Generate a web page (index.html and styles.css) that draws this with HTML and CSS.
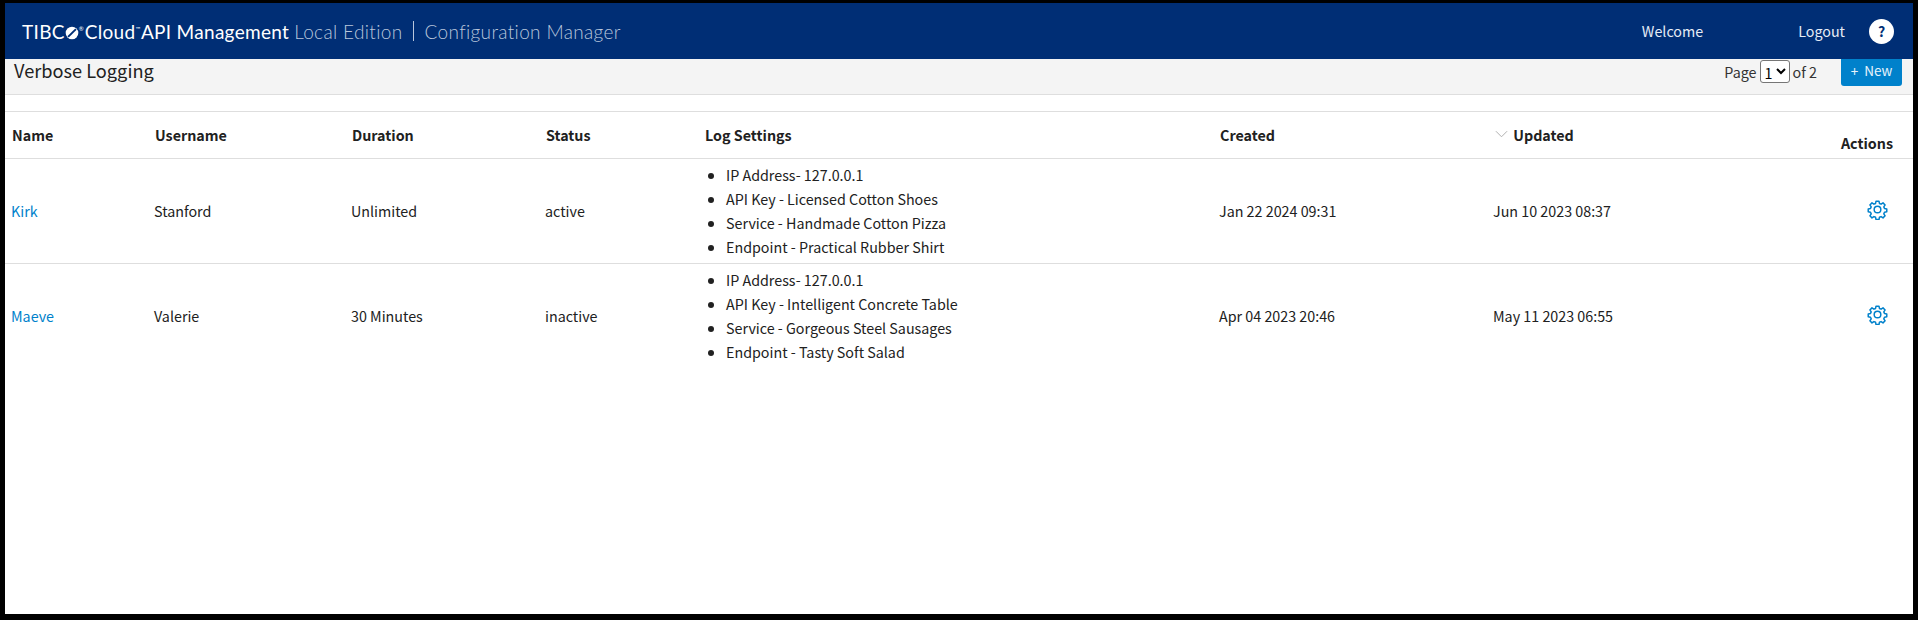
FILE: index.html
```html
<!DOCTYPE html>
<html lang="en">
<head>
    <meta charset="UTF-8">
    <title>Verbose Logging</title>
    <link rel="stylesheet" href="styles.css">
</head>
<body>
    <div class="page">
        <header class="navbar">
            <div class="brand">
                <span class="brand-strong">TIBC<svg class="brand-mark" viewBox="0 0 16 16" width="14" height="14"><circle cx="8" cy="8" r="7.2" fill="#fff"/><path d="M3.5 12.5 12.5 3.5" stroke="#002e75" stroke-width="2.2"/></svg><sup class="brand-tm">®</sup>Cloud<sup class="brand-tm">™</sup>API Management</span>
                <span class="brand-light">Local Edition</span>
                <span class="brand-divider"></span>
                <span class="brand-light">Configuration Manager</span>
            </div>
            <nav class="nav-links">
                <a class="nav-welcome" href="#">Welcome</a>
                <a class="nav-logout" href="#">Logout</a>
                <a class="nav-help" href="#">?</a>
            </nav>
        </header>

        <div class="toolbar">
            <h1>Verbose Logging</h1>
            <div class="pager">
                <span>Page</span>
                <select class="page-select"><option>1</option><option>2</option></select>
                <span>of 2</span>
            </div>
            <button class="btn-new" type="button"><span class="plus">+</span> New</button>
        </div>

        <div class="table-wrap">
            <table>
                <colgroup>
                    <col class="col-name">
                    <col class="col-username">
                    <col class="col-duration">
                    <col class="col-status">
                    <col class="col-settings">
                    <col class="col-created">
                    <col class="col-updated">
                    <col>
                </colgroup>
                <thead>
                    <tr>
                        <th>Name</th>
                        <th>Username</th>
                        <th>Duration</th>
                        <th>Status</th>
                        <th>Log Settings</th>
                        <th>Created</th>
                        <th class="th-sorted">
                            <svg class="sort-icon" viewBox="0 0 14 8" width="13" height="8"><path d="M1 1 7 7 13 1" fill="none" stroke="#aaa" stroke-width="1"/></svg>
                            Updated
                        </th>
                        <th class="th-actions">Actions</th>
                    </tr>
                </thead>
                <tbody>
                    <tr>
                        <td><a href="#">Kirk</a></td>
                        <td>Stanford</td>
                        <td>Unlimited</td>
                        <td>active</td>
                        <td>
                            <ul>
                                <li>IP Address- 127.0.0.1</li>
                                <li>API Key - Licensed Cotton Shoes</li>
                                <li>Service - Handmade Cotton Pizza</li>
                                <li>Endpoint - Practical Rubber Shirt</li>
                            </ul>
                        </td>
                        <td>Jan 22 2024 09:31</td>
                        <td>Jun 10 2023 08:37</td>
                        <td class="td-actions">
                            <svg class="gear" viewBox="0 0 24 24" width="21" height="21"><path d="M10.3 2.5h3.4l.5 2.6 1.9.8 2.2-1.5 2.4 2.4-1.5 2.2.8 1.9 2.6.5v3.2l-2.6.5-.8 1.9 1.5 2.2-2.4 2.4-2.2-1.5-1.9.8-.5 2.6h-3.4l-.5-2.6-1.9-.8-2.2 1.5-2.4-2.4 1.5-2.2-.8-1.9-2.6-.5v-3.2l2.6-.5.8-1.9-1.5-2.2 2.4-2.4 2.2 1.5 1.9-.8z" fill="none" stroke="#0081cb" stroke-width="1.7" stroke-linejoin="round"/><circle cx="12" cy="12" r="3.8" fill="none" stroke="#0081cb" stroke-width="1.7"/></svg>
                        </td>
                    </tr>
                    <tr>
                        <td><a href="#">Maeve</a></td>
                        <td>Valerie</td>
                        <td>30 Minutes</td>
                        <td>inactive</td>
                        <td>
                            <ul>
                                <li>IP Address- 127.0.0.1</li>
                                <li>API Key - Intelligent Concrete Table</li>
                                <li>Service - Gorgeous Steel Sausages</li>
                                <li>Endpoint - Tasty Soft Salad</li>
                            </ul>
                        </td>
                        <td>Apr 04 2023 20:46</td>
                        <td>May 11 2023 06:55</td>
                        <td class="td-actions">
                            <svg class="gear" viewBox="0 0 24 24" width="21" height="21"><path d="M10.3 2.5h3.4l.5 2.6 1.9.8 2.2-1.5 2.4 2.4-1.5 2.2.8 1.9 2.6.5v3.2l-2.6.5-.8 1.9 1.5 2.2-2.4 2.4-2.2-1.5-1.9.8-.5 2.6h-3.4l-.5-2.6-1.9-.8-2.2 1.5-2.4-2.4 1.5-2.2-.8-1.9-2.6-.5v-3.2l2.6-.5.8-1.9-1.5-2.2 2.4-2.4 2.2 1.5 1.9-.8z" fill="none" stroke="#0081cb" stroke-width="1.7" stroke-linejoin="round"/><circle cx="12" cy="12" r="3.8" fill="none" stroke="#0081cb" stroke-width="1.7"/></svg>
                        </td>
                    </tr>
                </tbody>
            </table>
        </div>
    </div>
</body>
</html>
```

FILE: styles.css
```css
html, body {
    height: 100%;
}

body {
    margin: 0;
    background-color: #000;
    font-family: "Noto Sans CJK SC", "Noto Sans", sans-serif;
    font-size: 14.3px;
    color: #212121;
    box-sizing: border-box;
    padding: 3px 5px 6px 5px;
    overflow: hidden;
}

.page {
    background-color: #fff;
    height: 100%;
}

.navbar {
    height: 56px;
    background-color: #002e75;
    color: #fff;
    display: flex;
    align-items: center;
    justify-content: space-between;
    padding: 0 19px 0 17px;
    box-sizing: border-box;
}

.brand {
    display: flex;
    align-items: center;
    font-family: "Lato", sans-serif;
    font-size: 19px;
    white-space: nowrap;
}

.brand-strong {
    font-weight: 400;
    letter-spacing: 0.3px;
}

.brand-mark {
    vertical-align: -1px;
}

.brand-tm {
    font-size: 6px;
    vertical-align: 8px;
    line-height: 0;
    letter-spacing: 0;
    margin-right: 1px;
}

.brand-light {
    font-weight: 300;
    color: #b9c6dc;
    letter-spacing: 0.35px;
    margin-left: 5px;
}

.brand-divider {
    width: 1px;
    height: 20px;
    background-color: #b9c6dc;
    margin: 0 6px 0 10px;
}

.nav-links {
    display: flex;
    align-items: center;
}

.nav-links a {
    color: #e6ecf5;
    text-decoration: none;
    line-height: 20px;
}

.nav-logout {
    margin-left: 95px;
}

.nav-links .nav-help {
    width: 25px;
    height: 25px;
    margin-left: 24px;
    border-radius: 50%;
    background-color: #fff;
    color: #002e75;
    font-weight: 700;
    font-size: 14px;
    line-height: 25px;
    text-align: center;
}

.toolbar {
    height: 36px;
    box-sizing: border-box;
    background-color: #f4f4f4;
    border-bottom: 1px solid #dedede;
    display: flex;
    align-items: flex-start;
    padding-left: 9px;
    padding-right: 11px;
}

.toolbar h1 {
    margin: 0;
    font-size: 18.2px;
    font-weight: 400;
    line-height: 22px;
    flex: 1;
}

.pager {
    display: flex;
    align-items: center;
    gap: 3px;
    color: #333;
    height: 24px;
}

.page-select {
    width: 30px;
    height: 23px;
    font-family: inherit;
    font-size: 14.3px;
    padding: 0;
    background-color: #fff;
    border: 1px solid #767676;
    border-radius: 3px;
}

.btn-new {
    width: 61px;
    height: 27px;
    margin-left: 24px;
    border: none;
    border-radius: 0 0 3px 3px;
    background-color: #0081cb;
    color: #e6f3fb;
    font-family: inherit;
    font-size: 13.5px;
    line-height: 22px;
    padding: 0 0 6px 0;
}

.plus {
    margin-right: 3px;
}

.table-wrap {
    margin-top: 16px;
}

table {
    width: 100%;
    table-layout: fixed;
    border-collapse: collapse;
    border-top: 1px solid #dedede;
}

.col-name { width: 143px; }
.col-username { width: 197px; }
.col-duration { width: 194px; }
.col-status { width: 159px; }
.col-settings { width: 515px; }
.col-created { width: 274px; }
.col-updated { width: 326px; }

th {
    height: 47px;
    box-sizing: border-box;
    padding: 0 7px;
    text-align: left;
    font-weight: 700;
    font-size: 14.3px;
    line-height: 20px;
    border-bottom: 1px solid #dedede;
}

.th-sorted {
    padding-left: 8px;
}

.th-sorted .sort-icon {
    margin-right: 2px;
    vertical-align: 3px;
}

.th-actions {
    text-align: right;
    padding: 16px 20px 0 0;
}

td {
    padding: 0 6px;
    line-height: 24px;
    height: 105px;
    box-sizing: border-box;
    vertical-align: middle;
}

tbody tr:first-child td {
    border-bottom: 1px solid #dedede;
}

td a {
    color: #0081cb;
    text-decoration: none;
}

ul {
    margin: 0;
    padding-left: 22px;
}

td.td-actions {
    text-align: right;
    padding: 0 25px 7px 0;
}

.gear {
    display: inline-block;
    vertical-align: middle;
}
```
